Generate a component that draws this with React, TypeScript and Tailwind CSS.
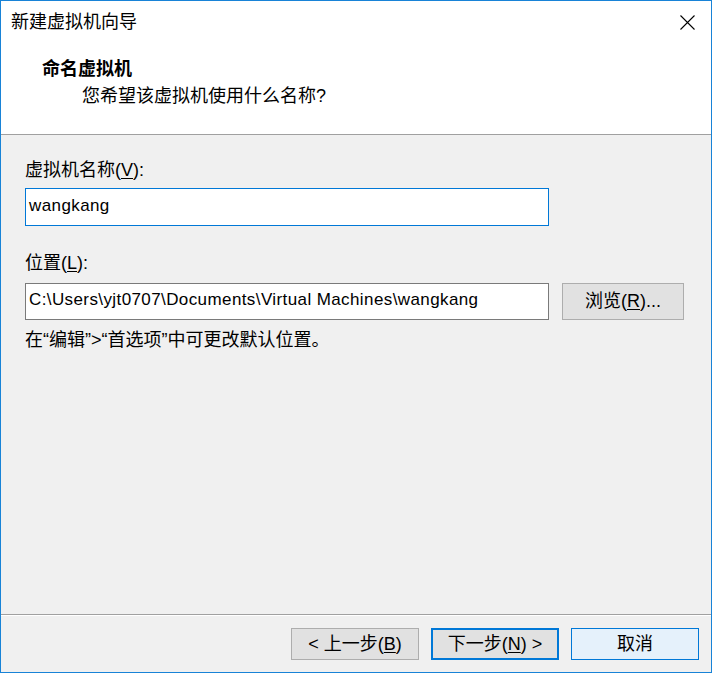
import React from "react";

const font = "font-['Liberation_Sans','Noto_Sans_CJK_SC',sans-serif]";

// Close glyph in the title bar
const CloseIcon = () => (
  <svg width="15" height="15" viewBox="0 0 15 15" fill="none">
    <path d="M0.5 0.5L14.5 14.5M14.5 0.5L0.5 14.5" stroke="#000" strokeWidth="1.1" />
  </svg>
);

const WizardButton = ({
  children,
  className,
}: {
  children: React.ReactNode;
  className: string;
}) => (
  <button
    className={`w-[128px] h-[32px] flex items-center justify-center text-[18px] text-black ${className}`}
  >
    {children}
  </button>
);

const App = () => {
  return (
    <div
      className={`w-[712px] h-[673px] border border-[#1883d7] bg-[#f0f0f0] flex flex-col text-black ${font}`}
    >
      {/* Title + header */}
      <div className="bg-white h-[133px] flex flex-col">
        <div className="h-[42px] flex items-center justify-between pl-[10px] pr-[16px]">
          <span className="text-[18px] leading-[24px]">新建虚拟机向导</span>
          <CloseIcon />
        </div>
        <div className="mt-[14px] pl-[41px] text-[18px] leading-[24px] font-bold">
          命名虚拟机
        </div>
        <div className="mt-[3px] pl-[81px] text-[18px] leading-[24px]">
          您希望该虚拟机使用什么名称?
        </div>
      </div>
      <div className="h-px bg-[#a0a0a0]" />

      {/* Form */}
      <div className="px-[24px] pt-[23px] flex flex-col">
        <div className="text-[18px] leading-[24px]">
          虚拟机名称(<u className="underline-offset-2">V</u>):
        </div>
        <div className="mt-[6px] w-[524px] h-[38px] border border-[#0078d7] bg-white flex items-center pl-[3px] pb-[3px] text-[17px] tracking-[0.4px]">
          wangkang
        </div>

        <div className="mt-[25px] text-[18px] leading-[24px]">
          位置(<u className="underline-offset-2">L</u>):
        </div>
        <div className="mt-[8px] flex">
          <div className="w-[524px] h-[37px] border border-[#7a7a7a] bg-white flex items-center pl-[3px] pb-[3px] text-[17px] tracking-[0.4px]">
            C:\Users\yjt0707\Documents\Virtual Machines\wangkang
          </div>
          <button className="ml-[13px] w-[122px] h-[37px] border border-[#adadad] bg-[#e1e1e1] flex items-center justify-center text-[18px]">
            浏览(<u className="underline-offset-2">R</u>)...
          </button>
        </div>
        <div className="mt-[8px] text-[18px] leading-[24px]">
          在“编辑”&gt;“首选项”中可更改默认位置。
        </div>
      </div>

      {/* Footer */}
      <div className="mt-auto">
        <div className="h-px bg-[#a0a0a0]" />
        <div className="h-px bg-white" />
        <div className="flex justify-end gap-[12px] pt-[12px] pb-[12px] pr-[12px]">
          <WizardButton className="border border-[#adadad] bg-[#e1e1e1]">
            &lt; 上一步(<u className="underline-offset-2">B</u>)
          </WizardButton>
          <WizardButton className="border-2 border-[#0078d7] bg-[#e1e1e1]">
            下一步(<u className="underline-offset-2">N</u>) &gt;
          </WizardButton>
          <WizardButton className="border border-[#0078d7] bg-[#e5f1fb]">
            取消
          </WizardButton>
        </div>
      </div>
    </div>
  );
};

export default App;
